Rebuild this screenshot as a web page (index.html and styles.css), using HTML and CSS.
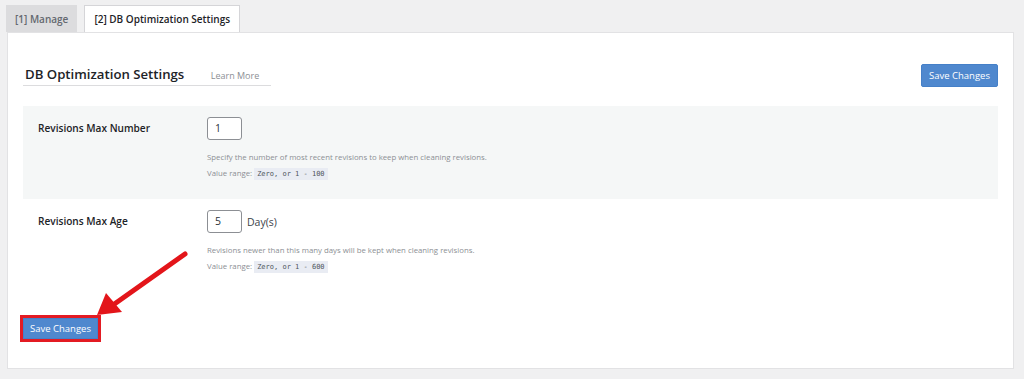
FILE: index.html
```html
<!DOCTYPE html>
<html lang="en">

<head>
  <meta charset="UTF-8">
  <meta name="viewport" content="width=device-width, initial-scale=1.0">
  <title>DB Optimization Settings</title>
  <link rel="stylesheet" href="styles.css">
</head>

<body>
  <div class="tabs">
    <a class="tab">[1] Manage</a>
    <a class="tab tab-active">[2] DB Optimization Settings</a>
  </div>

  <div class="panel">
    <div class="panel-head">
      <h3 class="title">DB Optimization Settings <span class="learn-more">Learn More</span></h3>
      <button class="btn">Save Changes</button>
    </div>

    <div class="settings">
      <div class="row row-grey">
        <div class="label">Revisions Max Number</div>
        <div class="field">
          <div class="input-line"><span class="input">1</span></div>
          <p class="desc">Specify the number of most recent revisions to keep when cleaning revisions.</p>
          <p class="desc">Value range: <code>Zero, or 1 - 100</code></p>
        </div>
      </div>
      <div class="row">
        <div class="label">Revisions Max Age</div>
        <div class="field">
          <div class="input-line"><span class="input">5</span> <span class="unit">Day(s)</span></div>
          <p class="desc">Revisions newer than this many days will be kept when cleaning revisions.</p>
          <p class="desc">Value range: <code>Zero, or 1 - 600</code></p>
        </div>
      </div>
    </div>

    <div class="panel-foot">
      <button class="btn btn-marked">Save Changes</button>
    </div>

    <!-- annotation arrow pointing at the bottom button -->
    <svg class="arrow" width="200" height="300" viewBox="0 0 200 300">
      <line x1="177" y1="221" x2="105" y2="272" stroke="#e3151a" stroke-width="5" stroke-linecap="round" />
      <polygon points="89,282 98,260 114,279" fill="#e3151a" />
    </svg>
  </div>
</body>

</html>
```

FILE: styles.css
```css
body {
  margin: 0;
  padding: 5px 10px 11px 6px;
  background-color: #f0f0f1;
  font-family: 'Open Sans', 'Noto Sans', sans-serif;
  color: #3c434a;
}

.tabs {
  display: flex;
  gap: 7px;
  align-items: flex-end;
}

.tab {
  box-sizing: border-box;
  font-size: 10px;
  font-weight: 600;
  padding: 0 8px;
  height: 27px;
  line-height: 26px;
  background-color: #dcdcde;
  color: #646970;
  border: 1px solid #dcdcde;
  border-bottom: none;
}

.tab-active {
  background-color: #ffffff;
  color: #1d2327;
  border-color: #d5d5d8;
  height: 28px;
  margin-bottom: -1px;
  padding: 0 9px;
  position: relative;
}

.panel {
  position: relative;
  background-color: #ffffff;
  border: 1px solid #e2e2e4;
  margin-left: 1px;
  padding: 0 15px 29px 15px;
}

.panel-head {
  display: flex;
  justify-content: space-between;
  align-items: flex-start;
  padding-top: 31px;
}

.title {
  margin: 3px 0 0 0;
  font-size: 13.2px;
  font-weight: 600;
  color: #1d2327;
  padding: 0 0 2px 2px;
  border-bottom: 1px solid #dcdcde;
  width: 246px;
  line-height: 15px;
  white-space: nowrap;
}

.learn-more {
  font-size: 9px;
  font-weight: 400;
  color: #8c8f94;
  margin-left: 23px;
}

.btn {
  font-family: inherit;
  font-size: 9.5px;
  color: #ffffff;
  background-color: #4f88ce;
  border: 1px solid #4580c8;
  border-radius: 2px;
  height: 23px;
  width: 77px;
  padding: 0;
  cursor: pointer;
}

.settings {
  margin-top: 19px;
}

.row {
  display: flex;
  padding: 11px 0 0 15px;
  height: 79px;
}

.row-grey {
  background-color: #f5f7f7;
  height: 82px;
}

.label {
  width: 169px;
  font-size: 10.1px;
  font-weight: 600;
  color: #1d2327;
  padding-top: 4px;
}

.input-line {
  display: flex;
  align-items: center;
  gap: 5px;
  font-size: 10.5px;
}

.input {
  display: inline-block;
  box-sizing: border-box;
  width: 35px;
  height: 23px;
  line-height: 21px;
  padding-left: 7px;
  border: 1px solid #8c8f94;
  border-radius: 3px;
  background-color: #ffffff;
  color: #2c3338;
}

.unit {
  color: #3c434a;
}

.desc {
  margin: 0;
  font-size: 7.8px;
  color: #8c8f94;
  line-height: 16px;
}

.input-line + .desc {
  margin-top: 9px;
}

code {
  font-family: 'DejaVu Sans Mono', monospace;
  font-size: 7px;
  background-color: #e9ecf3;
  color: #50575e;
  padding: 2px 3px;
}

.panel-foot {
  padding-top: 26px;
}

.btn-marked {
  border-radius: 0;
  box-shadow: 0 0 0 3px #e31b23;
  width: 75px;
  height: 21px;
}

.arrow {
  position: absolute;
  left: 0;
  top: 0;
}
```
